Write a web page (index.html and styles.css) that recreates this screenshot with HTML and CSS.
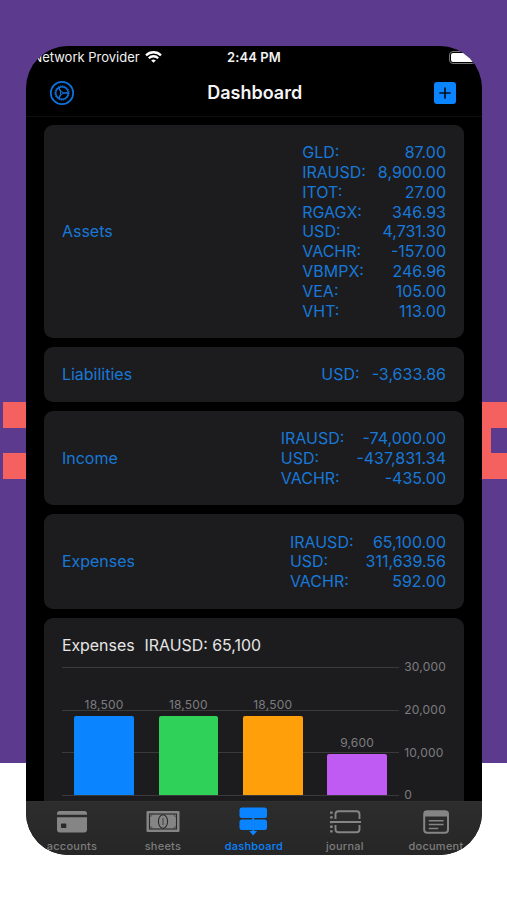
FILE: index.html
```
<!DOCTYPE html>
<html lang="en">
<head>
  <meta charset="UTF-8" />
  <meta name="viewport" content="width=device-width, initial-scale=1.0" />
  <title>Dashboard</title>
  <link rel="stylesheet" href="styles.css">
</head>
<body>
  <div class="phone">
    <div class="status">
      <div class="carrier">
        <span>Network Provider</span>
        <svg width="17" height="12" viewBox="0 0 17 12" fill="none" stroke="#fff" stroke-width="2.3">
          <path d="M1 4.3a10.8 10.8 0 0 1 15 0" />
          <path d="M3.8 7.2a6.7 6.7 0 0 1 9.4 0" />
          <path d="M8.5 11.8L6.2 9.5a3.3 3.3 0 0 1 4.6 0z" fill="#fff" stroke="none" />
        </svg>
      </div>
      <div class="time">2:44 PM</div>
      <div class="battery"><div class="charge"></div></div>
    </div>

    <div class="navbar">
      <svg width="26" height="26" viewBox="0 0 26 26" fill="none" stroke="#0b74e0">
        <circle cx="13" cy="13" r="11.2" stroke-width="1.7" />
        <circle cx="13" cy="13" r="6.3" stroke-width="1.5" />
        <circle cx="13" cy="13" r="7.2" stroke-width="1" stroke-dasharray="1.2 1.06" />
        <circle cx="12.6" cy="13" r="1.3" stroke-width="1" />
        <path d="M14 13h5M12 11.8L9.8 7.8M12 14.2l-2.2 4" stroke-width="1.4" />
      </svg>
      <h1>Dashboard</h1>
      <div class="add">
        <svg width="22" height="22" viewBox="0 0 22 22" stroke="#04101f" stroke-width="1.7" stroke-linecap="round">
          <path d="M11 6v10M6 11h10" />
        </svg>
      </div>
    </div>

    <div class="content">
      <div class="card">
        <div class="name">Assets</div>
        <div class="amounts">
          <span>GLD:</span><b>87.00</b>
          <span>IRAUSD:</span><b>8,900.00</b>
          <span>ITOT:</span><b>27.00</b>
          <span>RGAGX:</span><b>346.93</b>
          <span>USD:</span><b>4,731.30</b>
          <span>VACHR:</span><b>-157.00</b>
          <span>VBMPX:</span><b>246.96</b>
          <span>VEA:</span><b>105.00</b>
          <span>VHT:</span><b>113.00</b>
        </div>
      </div>
      <div class="card">
        <div class="name">Liabilities</div>
        <div class="amounts">
          <span>USD:</span><b>-3,633.86</b>
        </div>
      </div>
      <div class="card">
        <div class="name">Income</div>
        <div class="amounts">
          <span>IRAUSD:</span><b>-74,000.00</b>
          <span>USD:</span><b>-437,831.34</b>
          <span>VACHR:</span><b>-435.00</b>
        </div>
      </div>
      <div class="card">
        <div class="name">Expenses</div>
        <div class="amounts">
          <span>IRAUSD:</span><b>65,100.00</b>
          <span>USD:</span><b>311,639.56</b>
          <span>VACHR:</span><b>592.00</b>
        </div>
      </div>

      <div class="card chart-card">
        <div class="chart-title"><span>Expenses</span><span>IRAUSD: 65,100</span></div>
        <div class="chart">
          <div class="plot">
            <div class="col"><span>18,500</span><div class="bar blue" style="height: 79px"></div></div>
            <div class="col"><span>18,500</span><div class="bar green" style="height: 79px"></div></div>
            <div class="col"><span>18,500</span><div class="bar orange" style="height: 79px"></div></div>
            <div class="col"><span>9,600</span><div class="bar purple" style="height: 41px"></div></div>
          </div>
          <div class="axis">
            <span>30,000</span>
            <span>20,000</span>
            <span>10,000</span>
            <span>0</span>
          </div>
        </div>
      </div>
    </div>

    <div class="tabbar">
      <div class="tab">
        <svg width="34" height="30" viewBox="0 0 34 30" fill="#858585">
          <path d="M2 8.7V7.5A2.5 2.5 0 0 1 4.5 5h25A2.5 2.5 0 0 1 32 7.5v1.2z" />
          <path fill-rule="evenodd" d="M2 11.2h30v12.3a3 3 0 0 1-3 3H5a3 3 0 0 1-3-3zM6.8 17.5a.8.8 0 0 0-.8.8v2.9a.8.8 0 0 0 .8.8h3.7a.8.8 0 0 0 .8-.8v-2.9a.8.8 0 0 0-.8-.8z" />
        </svg>
        <span>accounts</span>
      </div>
      <div class="tab">
        <svg width="34" height="30" viewBox="0 0 34 30">
          <rect x=".5" y="5" width="33" height="21" rx="1" fill="#858585" />
          <g fill="none" stroke="#2b2b2b" stroke-width="1.1">
            <rect x="3.5" y="8" width="27" height="15" />
            <ellipse cx="17" cy="15.5" rx="4.6" ry="6.8" />
            <path d="M17 12v7" stroke-opacity=".7" />
            <path d="M3.5 10.5a2.500 2.500 0 0 0 2.500-2.500M28 8a2.500 2.500 0 0 0 2.500 2.500M3.500 20.500a2.500 2.500 0 0 1 2.500 2.500M28 23a2.500 2.500 0 0 1 2.500-2.500" stroke-opacity=".5" />
          </g>
        </svg>
        <span>sheets</span>
      </div>
      <div class="tab active">
        <svg width="34" height="30" viewBox="0 0 34 30" fill="#0a84ff">
          <rect x="2.5" y="1.500" width="27.500" height="10.500" rx="2.500" />
          <rect x="2.5" y="13.500" width="27.500" height="10.500" rx="2.500" />
          <path d="M15.200 11h2v14h3l-4 4.500-4-4.500h3z" />
        </svg>
        <span>dashboard</span>
      </div>
      <div class="tab">
        <svg width="34" height="30" viewBox="0 0 34 30" fill="none" stroke="#858585" stroke-width="1.900">
          <path d="M7.500 13V8.200A3 3 0 0 1 10.500 5.200h18A3 3 0 0 1 31.500 8.200V13M7.500 19v4.300a3 3 0 0 0 3 3h18a3 3 0 0 0 3-3V19" />
          <path d="M2 16h31" />
          <path d="M3.400 5.500v21.500" stroke-width="2.600" stroke-dasharray="2.300 2.400" />
        </svg>
        <span>journal</span>
      </div>
      <div class="tab">
        <svg width="34" height="30" viewBox="0 0 34 30" fill="none" stroke="#858585">
          <rect x="5.200" y="5.200" width="23.800" height="21.600" rx="3" stroke-width="2" />
          <path d="M5 10.500V7.500a2.500 2.500 0 0 1 2.500-2.500h19.500a2.500 2.500 0 0 1 2.500 2.500v3z" fill="#858585" stroke="none" />
          <path d="M9.800 14.800h14.800M9.800 18.600h14.800M9.800 22.400h9.500" stroke-width="1.500" />
        </svg>
        <span>document</span>
      </div>
    </div>
  </div>
</body>
</html>
```
FILE: styles.css
```
* {
  box-sizing: border-box;
}

body {
  margin: 0;
  height: 900px;
  overflow: hidden;
  padding: 45.5px 25.5px 0 26.4px;
  font-family: Inter, "Liberation Sans", sans-serif;
  background:
    linear-gradient(#5c3a8e, #5c3a8e) 491px 428px / 16px 25px no-repeat,
    linear-gradient(#f4615e, #f4615e) 480px 402px / 27px 77px no-repeat,
    linear-gradient(#f4615e, #f4615e) 3px 402px / 26px 26px no-repeat,
    linear-gradient(#f4615e, #f4615e) 3px 453px / 26px 26px no-repeat,
    linear-gradient(#5c3a8e, #5c3a8e) 0 0 / 100% 763px no-repeat,
    #fff;
}

.phone {
  height: 809.5px;
  display: flex;
  flex-direction: column;
  background: #000;
  border-radius: 42px;
  overflow: hidden;
}

.status {
  height: 24px;
  display: grid;
  grid-template-columns: 1fr auto 1fr;
  align-items: center;
  padding: 0 6px 1px 6px;
  color: #f2f2f2;
  font-size: 13px;
}

.carrier {
  display: flex;
  align-items: center;
  gap: 5px;
}

.time {
  font-weight: 600;
  letter-spacing: 0.1px;
}

.battery {
  justify-self: end;
  width: 27px;
  height: 13px;
  padding: 1px;
  border: 1px solid #777;
  border-radius: 4px;
}

.charge {
  height: 100%;
  background: #fff;
  border-radius: 2px;
}

.navbar {
  height: 47px;
  padding: 0 25px 0 22.5px;
  display: flex;
  justify-content: space-between;
  align-items: center;
  border-bottom: 1px solid #0e0e0e;
}

h1 {
  margin: 0;
  color: #f4f4f4;
  font-size: 18px;
  font-weight: 600;
}

.add {
  width: 22px;
  height: 22px;
  background: #0a84ff;
  border-radius: 3px;
}

.add svg {
  display: block;
}

.content {
  flex: 1;
  min-height: 0;
  overflow: hidden;
  display: flex;
  flex-direction: column;
  gap: 9px;
  padding: 8.5px 17.5px 0;
}

.card {
  flex: none;
  display: flex;
  justify-content: space-between;
  align-items: center;
  padding: 18.3px 18px 16.7px;
  background: #1c1c1e;
  border-radius: 9px;
  color: #1878d8;
  font-size: 16px;
  line-height: 19.8px;
}

.amounts {
  display: grid;
  grid-template-columns: auto auto;
  column-gap: 12px;
}

.amounts b {
  font-weight: 400;
  text-align: right;
}

.chart-card {
  display: block;
  height: 230px;
}

.chart-title {
  display: flex;
  gap: 10px;
  color: #e6e6e6;
  font-size: 15.9px;
}

.chart {
  display: flex;
  gap: 5px;
  margin-top: 11px;
}

.plot {
  width: 338.5px;
  height: 129px;
  display: flex;
  border-bottom: 1px solid #3a3a3c;
  background:
    linear-gradient(#3a3a3c, #3a3a3c) 0 0 / 100% 1px no-repeat,
    linear-gradient(#3a3a3c, #3a3a3c) 0 43px / 100% 1px no-repeat,
    linear-gradient(#3a3a3c, #3a3a3c) 0 85px / 100% 1px no-repeat;
}

.col {
  flex: 1;
  display: flex;
  flex-direction: column;
  justify-content: flex-end;
  align-items: center;
}

.col span,
.axis span {
  color: #7c7c80;
  font-size: 12px;
  line-height: 14px;
  letter-spacing: 0.2px;
}

.col span {
  margin-bottom: 4px;
}

.bar {
  width: 59.5px;
  border-radius: 2px 2px 0 0;
}

.blue { background: #0a84ff; }
.green { background: #30d158; }
.orange { background: #ff9f0a; }
.purple { background: #bf5af2; }

.axis {
  height: 139px;
  margin-top: -5.5px;
  display: flex;
  flex-direction: column;
  justify-content: space-between;
}

.axis span {
  line-height: 11px;
}

.tabbar {
  height: 54.5px;
  display: flex;
  border-top: 1px solid #303030;
  background: linear-gradient(#2d2d2d, #262626);
}

.tab {
  flex: 1;
  display: flex;
  flex-direction: column;
  align-items: center;
  padding-top: 4.5px;
  color: #7d7d7d;
  font-size: 11px;
  font-weight: 500;
  letter-spacing: 0.25px;
}

.tab span {
  line-height: 14px;
  margin-top: 3px;
}

.active {
  color: #0a84ff;
}
```
